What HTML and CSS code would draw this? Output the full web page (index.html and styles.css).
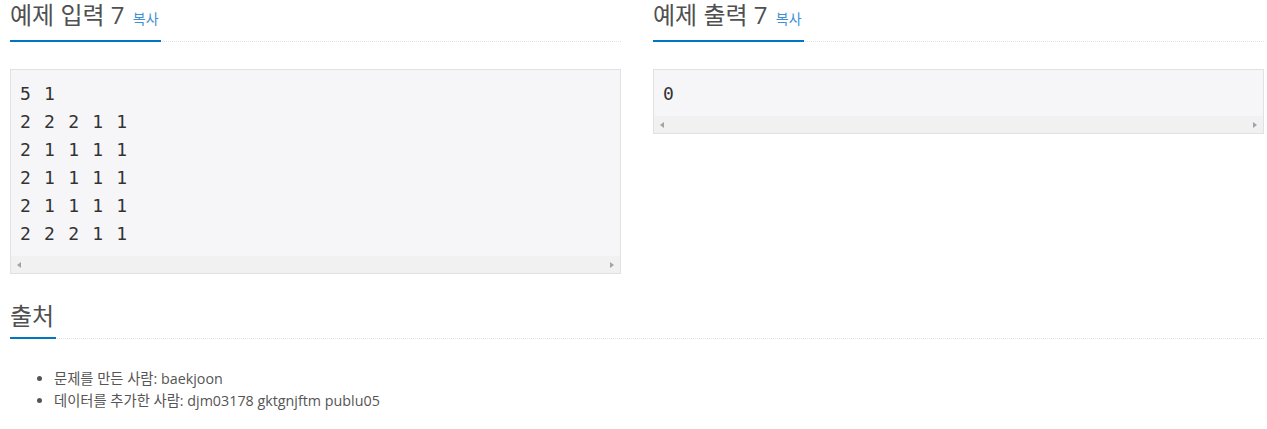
FILE: index.html
```html
<!DOCTYPE html>
<html lang="ko">
<head>
<meta charset="utf-8">
<title>예제</title>
<link rel="stylesheet" href="styles.css">
</head>
<body>
<div class="samples">
  <section class="col">
    <div class="headline">
      <h2>예제 입력 7 <a class="copy" href="#">복사</a></h2>
    </div>
    <div class="sample">
      <pre class="sampledata">5 1
2 2 2 1 1
2 1 1 1 1
2 1 1 1 1
2 1 1 1 1
2 2 2 1 1</pre>
      <div class="hscroll"><span class="arrow left"></span><span class="arrow right"></span></div>
    </div>
  </section>
  <section class="col">
    <div class="headline">
      <h2>예제 출력 7 <a class="copy" href="#">복사</a></h2>
    </div>
    <div class="sample">
      <pre class="sampledata">0</pre>
      <div class="hscroll"><span class="arrow left"></span><span class="arrow right"></span></div>
    </div>
  </section>
</div>
<section class="source">
  <div class="headline">
    <h2>출처</h2>
  </div>
  <ul class="credits">
    <li>문제를 만든 사람: baekjoon</li>
    <li>데이터를 추가한 사람: djm03178 gktgnjftm publu05</li>
  </ul>
</section>
</body>
</html>
```
FILE: styles.css
```css
html, body {
  margin: 0;
  padding: 0;
  background: #fff;
}
body {
  padding: 0 3px 0 10px;
  font-family: "Open Sans", "Noto Sans CJK KR", sans-serif;
  font-size: 14px;
  color: #555;
}
.samples {
  display: grid;
  grid-template-columns: 1fr 1fr;
  column-gap: 32px;
}
.col {
  min-width: 0;
}
.headline {
  display: flex;
  align-items: flex-end;
  border-bottom: 1px dotted #dfe3e8;
  margin-bottom: 27px;
}
.headline h2 {
  margin: 0 0 -1px 0;
  padding: 0 2px 6px 0;
  font-size: 24px;
  font-weight: 400;
  line-height: 30px;
  color: #505050;
  border-bottom: 2px solid #0076c0;
  white-space: nowrap;
}
.copy {
  font-size: 14px;
  color: #3f8fd2;
  text-decoration: none;
  margin-left: 2px;
}
.sample {
  border: 1px solid #e1e1e4;
  background: #f6f6f8;
}
.sampledata {
  margin: 0;
  padding: 10px 9px 8px;
  font-family: "DejaVu Sans Mono", monospace;
  font-size: 18px;
  letter-spacing: 1.2px;
  line-height: 28px;
  color: #333;
  white-space: pre;
  overflow: hidden;
}
.hscroll {
  height: 17px;
  background: #f1f1f1;
  display: flex;
  align-items: center;
  justify-content: space-between;
  padding: 0 6px;
}
.arrow {
  width: 0;
  height: 0;
  border-top: 3.5px solid transparent;
  border-bottom: 3.5px solid transparent;
}
.arrow.left {
  border-right: 4px solid #a3a3a3;
}
.arrow.right {
  border-left: 4px solid #a3a3a3;
}
.source {
  margin-top: 27px;
}
.source .headline {
  margin-bottom: 29px;
}
.credits {
  margin: 0;
  padding-left: 44px;
  list-style: disc;
  line-height: 22px;
  font-size: 14.3px;
  color: #555;
}
```
